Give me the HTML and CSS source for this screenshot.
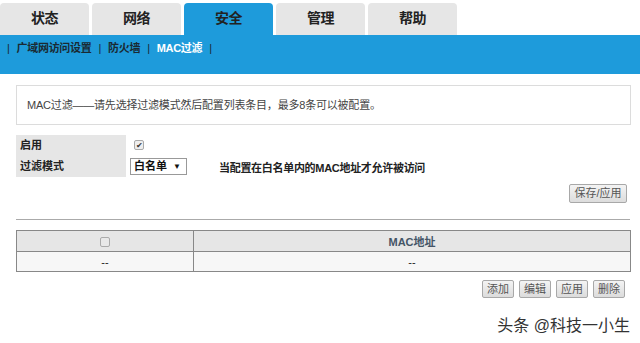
FILE: index.html
```html
<!DOCTYPE html>
<html lang="zh">
<head>
<meta charset="utf-8">
<link rel="stylesheet" href="styles.css">
</head>
<body>
<nav class="tabs">
  <div class="tab">状态</div>
  <div class="tab">网络</div>
  <div class="tab active">安全</div>
  <div class="tab">管理</div>
  <div class="tab">帮助</div>
</nav>
<div class="subnav">
  <span class="sep">|</span><span class="link">广域网访问设置</span><span class="sep">|</span><span class="link">防火墙</span><span class="sep">|</span><span class="link current">MAC过滤</span><span class="sep">|</span>
</div>
<main class="content">
  <div class="info">MAC过滤——请先选择过滤模式然后配置列表条目，最多8条可以被配置。</div>
  <div class="form">
    <div class="label">启用</div>
    <div class="ctrl"><span class="check checked">✔</span></div>
    <div class="label">过滤模式</div>
    <div class="ctrl">
      <span class="select">白名单<span class="arrow">▼</span></span>
      <span class="hint">当配置在白名单内的MAC地址才允许被访问</span>
    </div>
  </div>
  <div class="save-row"><button class="btn save">保存/应用</button></div>
  <div class="rule"></div>
  <table class="list">
    <tr class="head"><td class="c1"><span class="check empty"></span></td><td class="c2">MAC地址</td></tr>
    <tr class="row"><td class="c1">--</td><td class="c2">--</td></tr>
  </table>
  <div class="actions">
    <button class="btn small">添加</button>
    <button class="btn small">编辑</button>
    <button class="btn small">应用</button>
    <button class="btn small">删除</button>
  </div>
  <div class="watermark">头条 @科技一小生</div>
</main>
</body>
</html>
```
FILE: styles.css
```css
* { box-sizing: border-box; }
body {
  margin: 0;
  background: #fff;
  font-family: "Liberation Sans", "Noto Sans CJK SC", sans-serif;
  font-size: 11px;
  color: #222;
}
.tabs {
  display: flex;
  gap: 3px;
  padding-top: 3px;
  height: 35px;
}
.tab {
  width: 89px;
  height: 32px;
  background: #e6e6e6;
  border-radius: 4px 4px 0 0;
  font-size: 14px;
  font-weight: bold;
  text-align: center;
  line-height: 30px;
  color: #222;
  letter-spacing: -0.5px;
}
.tab.active { background: #1e9bdb; }
.subnav {
  height: 39px;
  background: #1e9bdb;
  padding: 6px 0 0 0;
  font-weight: bold;
  font-size: 11px;
  line-height: 14px;
  color: #1a2a33;
  letter-spacing: -0.3px;
}
.sep { padding: 0 7px; font-weight: normal; }
.link.current { color: #fff; }
.content { padding: 11px 9px 0 16px; }
.info {
  height: 40px;
  border: 1px solid #dcdcdc;
  padding-left: 10px;
  line-height: 38px;
  color: #444;
  font-size: 11px;
  letter-spacing: -0.2px;
}
.form {
  margin-top: 10px;
  display: grid;
  grid-template-columns: 110px 1fr;
  grid-auto-rows: 21px;
}
.label {
  background: #e6e6e6;
  font-weight: bold;
  padding-left: 4px;
  line-height: 21px;
}
.ctrl {
  display: flex;
  align-items: center;
  padding-left: 4px;
}
.check {
  display: inline-block;
  width: 10px;
  height: 10px;
  border: 1px solid #aaa;
  border-radius: 2px;
  background: #eee;
  font-size: 8px;
  line-height: 9px;
  text-align: center;
  color: #333;
}
.ctrl .check { margin-left: 4px; margin-top: -2px; }
.select {
  position: relative;
  width: 57px;
  height: 17px;
  border: 1px solid #999;
  background: #fff;
  padding-left: 3px;
  font-size: 11px;
  font-weight: bold;
  line-height: 15px;
  color: #111;
}
.arrow {
  position: absolute;
  right: 5px;
  top: 0;
  font-size: 8px;
}
.hint {
  margin-left: 32px;
  font-weight: bold;
  color: #222;
  letter-spacing: -0.3px;
}
.save-row {
  display: flex;
  justify-content: flex-end;
  margin-top: 7px;
  padding-right: 4px;
}
.btn {
  font-family: inherit;
  font-size: 11px;
  color: #555;
  background: linear-gradient(#f4f4f4, #dcdcdc);
  border: 1px solid #a8a8a8;
  border-radius: 2px;
  padding: 0;
  height: 19px;
  line-height: 17px;
}
.save { width: 58px; }
.rule {
  margin-top: 16px;
  height: 1px;
  background: #aaa;
  width: 614px;
}
.list {
  margin-top: 10px;
  width: 615px;
  border-collapse: collapse;
  border: 1px solid #888;
}
.list td {
  border: 1px solid #888;
  height: 20px;
  text-align: center;
  padding: 0;
  font-size: 11px;
}
.list .c1 { width: 177px; }
.head td { background: #e6e6e6; height: 21px; }
.head .c2 { color: #445566; font-weight: bold; }
.head .check { width: 10px; height: 10px; vertical-align: middle; background: #e8e8e8; }
.row td { background: #f7f7f7; color: #222; }
.actions {
  display: flex;
  justify-content: flex-end;
  gap: 5px;
  margin-top: 8px;
  padding-right: 6px;
}
.small { width: 32px; height: 18px; }
.watermark {
  text-align: right;
  margin-top: 14px;
  padding-right: 1px;
  font-size: 16px;
  color: #333;
  text-shadow: 0 0 2px #fff;
}
```
